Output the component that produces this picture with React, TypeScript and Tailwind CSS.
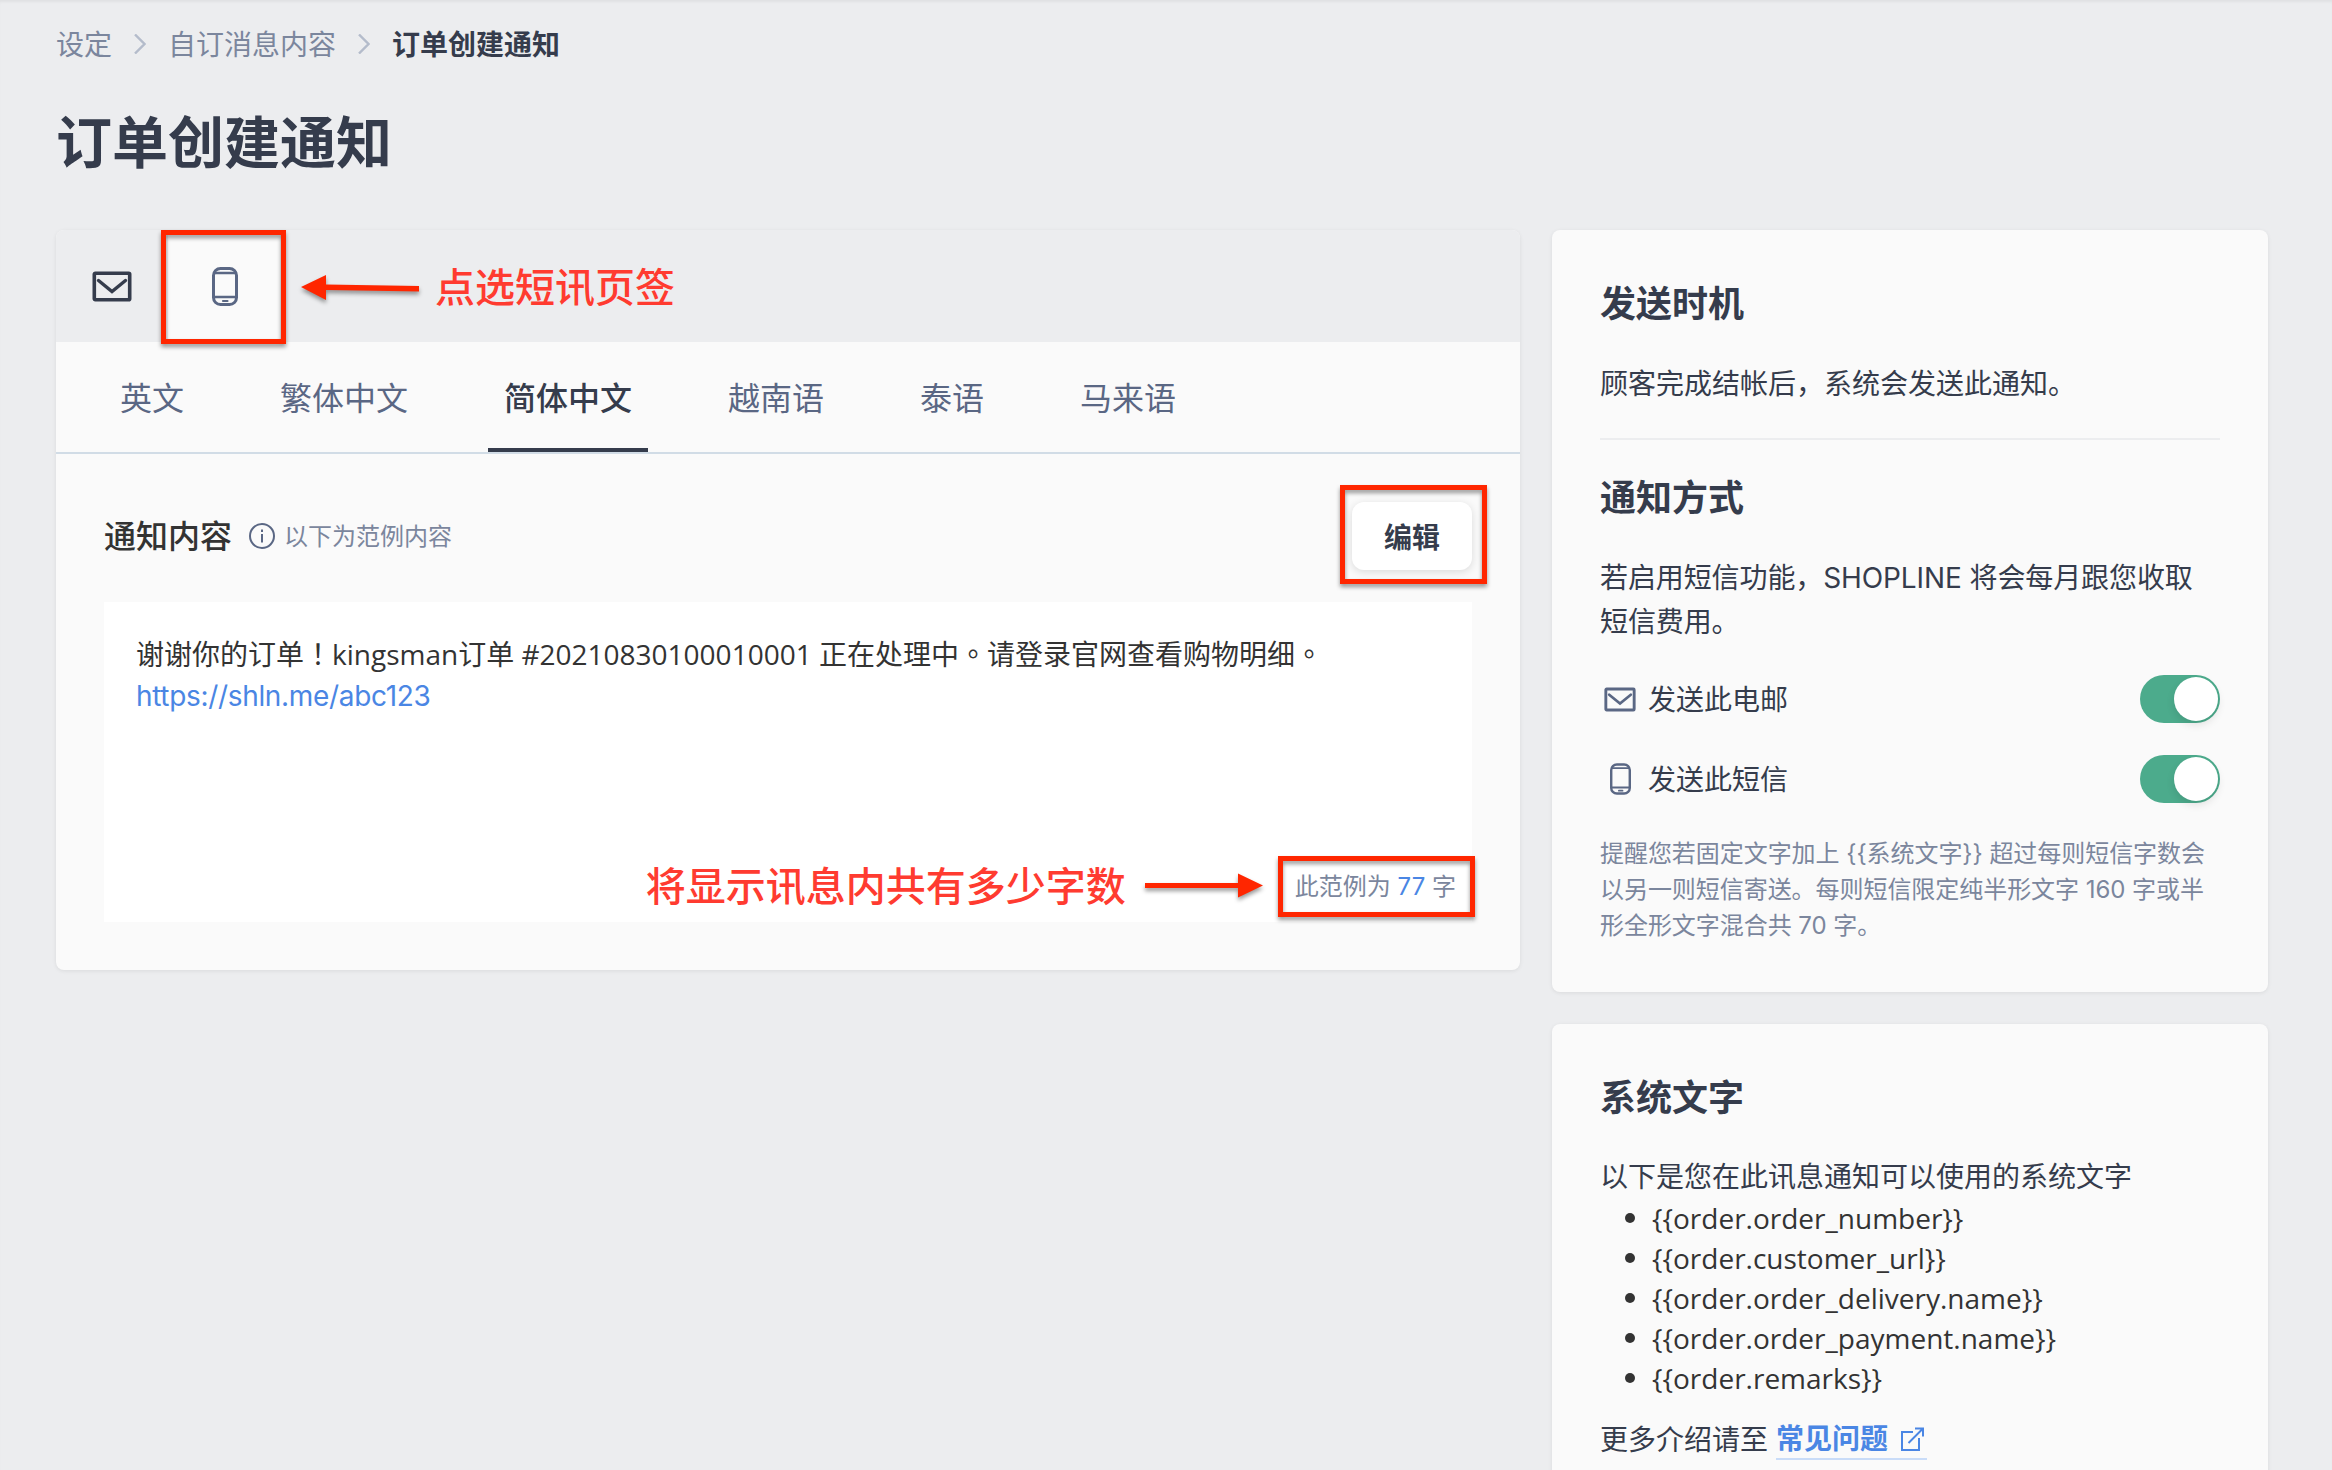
import { useState } from 'react'
import type { ReactNode } from 'react'

const languages = ['英文', '繁体中文', '简体中文', '越南语', '泰语', '马来语']

const variables = [
  '{{order.order_number}}',
  '{{order.customer_url}}',
  '{{order.order_delivery.name}}',
  '{{order.order_payment.name}}',
  '{{order.remarks}}',
]

const smsNote =
  '提醒您若固定文字加上 {{系统文字}} 超过每则短信字数会以另一则短信寄送。每则短信限定纯半形文字 160 字或半形全形文字混合共 70 字。'

function MailIcon({ className }: { className?: string }) {
  return (
    <svg className={className} viewBox="0 0 40 31" fill="none" stroke="currentColor">
      <rect x="2.3" y="2.3" width="35.4" height="26.4" rx="1" strokeWidth="3.6" />
      <path d="M6.5 9.5L20 20.5l13.5-11" strokeWidth="3.4" strokeLinecap="round" />
    </svg>
  )
}

function PhoneIcon({ className }: { className?: string }) {
  return (
    <svg className={className} viewBox="0 0 26 39" fill="none" stroke="currentColor" strokeWidth="3">
      <rect x="1.5" y="1.5" width="23" height="36" rx="7" />
      <path d="M2 6h22M2 30h22" strokeWidth="2.4" />
      <path d="M11 34h4.5" strokeWidth="2.2" strokeLinecap="round" />
    </svg>
  )
}

function InfoIcon() {
  return (
    <svg className="w-[26px] h-[26px] text-[#5a6784]" viewBox="0 0 26 26" fill="none" stroke="currentColor" strokeWidth="2">
      <circle cx="13" cy="13" r="12" />
      <path d="M13 11v8.5M13 6.5v2.5" />
    </svg>
  )
}

function Chevron() {
  return (
    <svg className="w-3 h-5 mx-[22px] text-[#b4bccb]" viewBox="0 0 12 20" fill="none" stroke="currentColor" strokeWidth="2.4">
      <path d="M1 .5l9.5 9.5L1 19.5" />
    </svg>
  )
}

function Toggle() {
  const [on, setOn] = useState(true)

  return (
    <button
      onClick={() => setOn(!on)}
      className={`flex w-20 h-12 p-0.5 rounded-full ${on ? 'justify-end bg-[#4cab8c]' : 'justify-start bg-gray-300'}`}
    >
      <span className="w-11 h-11 rounded-full bg-white shadow-[0_4px_8px_rgba(0,0,0,0.1)]" />
    </button>
  )
}

function Card({ children, className = '' }: { children: ReactNode; className?: string }) {
  return (
    <section className={`bg-[#fafafa] rounded-lg shadow-[0_1px_4px_rgba(0,0,0,0.08)] ${className}`}>
      {children}
    </section>
  )
}

// Red marker frame, sits over the element it points out
function Marker({ className }: { className: string }) {
  return (
    <span
      className={`absolute pointer-events-none border-[5px] border-[#ff2600] drop-shadow-[0_3px_2px_rgba(0,0,0,0.4)] ${className}`}
    />
  )
}

export default function App() {
  const [active, setActive] = useState('简体中文')

  return (
    <div className="w-[2332px] h-[1470px] overflow-hidden bg-[#ecedef] px-14 text-[28px] text-[#353c4c] font-['Open_Sans','Noto_Sans_CJK_SC',sans-serif] shadow-[inset_0_3px_3px_-1px_rgba(0,0,0,0.05)]">
      <nav className="flex items-center h-[88px] text-[#7b869d]">
        <a>设定</a>
        <Chevron />
        <a>自订消息内容</a>
        <Chevron />
        <span className="font-bold text-[#353c4c]">订单创建通知</span>
      </nav>

      <h1 className="h-[142px] pt-[13px] text-[56px] leading-[80px] font-bold">订单创建通知</h1>

      <div className="flex items-start gap-8">
        <Card className="w-[1464px] h-[740px]">
          <div className="relative flex h-28 rounded-t-lg bg-[#ecedef]">
            <button className="flex items-center justify-center w-28">
              <MailIcon className="w-10 h-[31px]" />
            </button>
            <button className="relative flex items-center justify-center w-28 pl-px bg-[#fafafa] text-[#5a6784]">
              <PhoneIcon className="w-[26px] h-[39px]" />
              <Marker className="-left-[7px] top-0 w-[125px] h-[114px]" />
            </button>
            <div className="flex items-center ml-[21px] pt-0.5 text-[40px] font-medium text-[#ff3b30]">
              <svg className="w-[120px] h-10 mr-[14px] drop-shadow-[0_3px_2px_rgba(0,0,0,0.4)]" viewBox="0 0 120 40" fill="#ff2600">
                <path d="M0 20L25 8v9.5l93 1.5v5.5l-93-1.5v10z" />
              </svg>
              点选短讯页签
            </div>
          </div>

          <div className="flex gap-16 h-28 px-12 border-b-2 border-[#d1dce6] text-[32px] text-[#5a6784]">
            {languages.map((lang) => (
              <button
                key={lang}
                onClick={() => setActive(lang)}
                className={`px-4 pt-[5px] border-b-4 ${
                  lang === active ? 'border-[#353c4c] font-medium text-[#353c4c]' : 'border-transparent'
                }`}
              >
                {lang}
              </button>
            ))}
          </div>

          <div className="px-12 pt-12">
            <div className="flex items-center h-[68px]">
              <h2 className="text-[32px] font-medium text-[#333]">通知内容</h2>
              <div className="flex items-center gap-[9px] ml-[17px] text-2xl text-[#7b869d]">
                <InfoIcon />
                以下为范例内容
              </div>
              <button className="relative ml-auto w-[120px] h-[68px] pt-0.5 rounded-xl bg-white font-bold shadow-[0_2px_8px_rgba(0,0,0,0.13)]">
                编辑
                <Marker className="-left-3 -top-[17px] w-[147px] h-[99px]" />
              </button>
            </div>

            <div className="flex flex-col justify-between h-80 mt-8 pl-8 pr-4 pt-[31px] bg-white">
              <div className="leading-[42px] text-[#333] font-['Open_Sans','Noto_Sans_CJK_TC',sans-serif]">
                <p>谢谢你的订单！kingsman订单 #20210830100010001 正在处理中。请登录官网查看购物明细。</p>
                <a className="relative -top-px text-[#4a86e4] tracking-[-0.33px] font-[Inter,sans-serif]">
                  https://shln.me/abc123
                </a>
              </div>
              <div className="relative flex items-center justify-end h-[72px]">
                <div className="flex items-center text-[40px] font-medium text-[#ff3b30]">
                  将显示讯息内共有多少字数
                  <svg className="w-[118px] h-10 ml-[19px] mr-8 drop-shadow-[0_3px_2px_rgba(0,0,0,0.4)]" viewBox="0 0 118 40" fill="#ff2600">
                    <path d="M0 17h93V7.500l25 12-25 12v-9.500H0z" />
                  </svg>
                </div>
                <span className="pt-0.5 text-2xl text-[#7b869d] font-[Inter,'Noto_Sans_CJK_SC',sans-serif]">
                  此范例为 <span className="text-[#4a86e4]">77</span> 字
                </span>
                <Marker className="-right-[19px] top-[6px] w-[197px] h-[61px]" />
              </div>
            </div>
          </div>
        </Card>

        <div className="w-[716px] space-y-8 font-[Inter,'Noto_Sans_CJK_SC',sans-serif]">
          <Card className="h-[762px] px-12 pt-12">
            <h2 className="text-4xl leading-[52px] font-bold">发送时机</h2>
            <p className="mt-8 leading-[44px]">顾客完成结帐后，系统会发送此通知。</p>
            <hr className="mt-8 border-t-2 border-[#ecedef]" />
            <h2 className="mt-8 text-4xl leading-[52px] font-bold">通知方式</h2>
            <p className="mt-8 leading-[44px] tracking-[-0.1px]">若启用短信功能，SHOPLINE 将会每月跟您收取短信费用。</p>
            <div className="mt-[31px] space-y-8">
              <div className="flex items-center h-12">
                <MailIcon className="w-8 h-[25px] ml-1 mr-3 text-[#5a6784]" />
                <span className="pt-0.5">发送此电邮</span>
                <span className="ml-auto"><Toggle /></span>
              </div>
              <div className="flex items-center h-12">
                <PhoneIcon className="w-[21px] h-8 ml-[10px] mr-[17px] text-[#5a6784]" />
                <span className="pt-0.5">发送此短信</span>
                <span className="ml-auto"><Toggle /></span>
              </div>
            </div>
            <p className="mt-[33px] text-2xl leading-9 tracking-[-0.05px] text-[#7b869d]">{smsNote}</p>
          </Card>

          <Card className="h-[520px] px-12 pt-12">
            <h2 className="text-4xl leading-[52px] font-bold">系统文字</h2>
            <p className="mt-[31px] leading-[44px]">以下是您在此讯息通知可以使用的系统文字</p>
            <ul className="-mt-px text-[#333] leading-10 font-['Open_Sans',sans-serif]">
              {variables.map((v) => (
                <li key={v} className="flex items-center">
                  <span className="w-[10px] h-[10px] ml-[25px] mr-[17px] rounded-full bg-[#333]" />
                  {v}
                </li>
              ))}
            </ul>
            <p className="flex items-center mt-[22px] leading-[38px]">
              更多介绍请至
              <a className="flex items-center ml-2 pr-[3px] border-b-2 border-[#c9dcf8] font-bold text-[#4a86e4]">
                常见问题
                <svg className="w-6 h-6 ml-3" viewBox="0 0 24 24" fill="none" stroke="currentColor" strokeWidth="2">
                  <path d="M13 5H2v18h17V11M15 1.500h8v8M23 1.500L8.500 16" />
                </svg>
              </a>
            </p>
          </Card>
        </div>
      </div>
    </div>
  )
}
